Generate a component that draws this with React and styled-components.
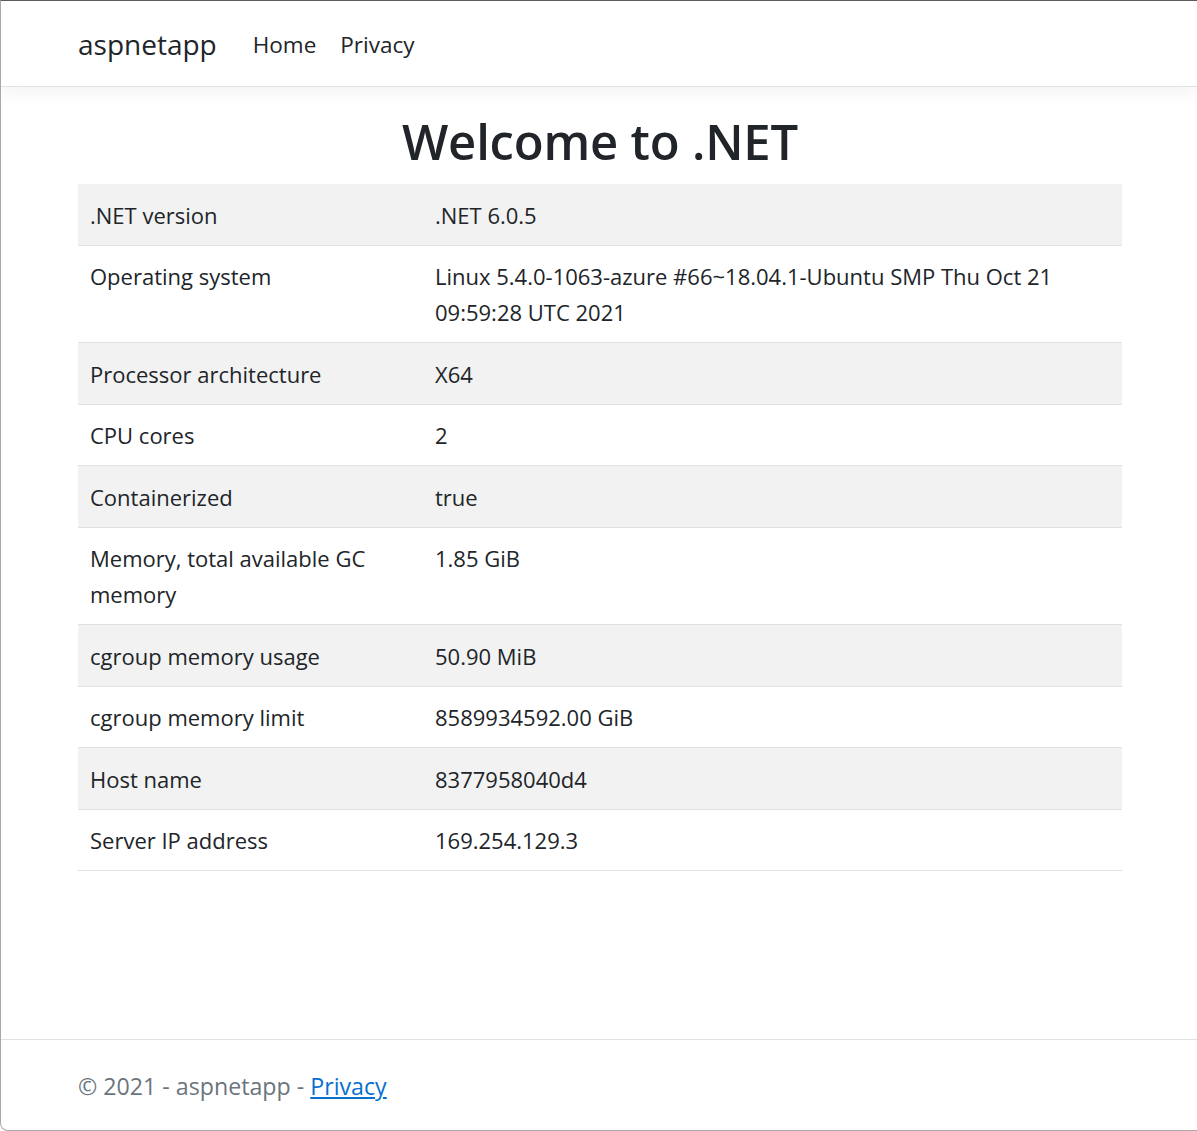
import styled, { createGlobalStyle } from "styled-components"

const GlobalStyle = createGlobalStyle`
  html, body {
    margin: 0;
    padding: 0;
  }
  body {
    font-family: "Open Sans", "Noto Sans", sans-serif;
    font-size: 22px;
    line-height: 36px;
    color: #212529;
    background: #ffffff;
  }
  * {
    box-sizing: border-box;
  }
`

const rows = [
  [".NET version", ".NET 6.0.5"],
  ["Operating system", "Linux 5.4.0-1063-azure #66~18.04.1-Ubuntu SMP Thu Oct 21 09:59:28 UTC 2021"],
  ["Processor architecture", "X64"],
  ["CPU cores", "2"],
  ["Containerized", "true"],
  ["Memory, total available GC memory", "1.85 GiB"],
  ["cgroup memory usage", "50.90 MiB"],
  ["cgroup memory limit", "8589934592.00 GiB"],
  ["Host name", "8377958040d4"],
  ["Server IP address", "169.254.129.3"],
]

export default function App() {
  return (
    <>
      <GlobalStyle />
      <Frame>
        <NavBar>
          <Container>
            <Brand href="#">aspnetapp</Brand>
            <NavList>
              <NavItem href="#">Home</NavItem>
              <NavItem href="#">Privacy</NavItem>
            </NavList>
          </Container>
        </NavBar>
        <Main>
          <Container>
            <Title>Welcome to .NET</Title>
            <InfoTable>
              <colgroup>
                <LabelCol />
                <col />
              </colgroup>
              <tbody>
                {rows.map(([label, value], i) => (
                  <Row key={label} $striped={i % 2 === 0}>
                    <Cell>{label}</Cell>
                    <Cell>{value}</Cell>
                  </Row>
                ))}
              </tbody>
            </InfoTable>
          </Container>
        </Main>
        <Footer>
          <Container>
            © 2021 - aspnetapp - <FooterLink href="#">Privacy</FooterLink>
          </Container>
        </Footer>
      </Frame>
    </>
  )
}

const Frame = styled.div`
  display: flex;
  flex-direction: column;
  min-height: 100vh;
  border-top: 1px solid #5c5c5c;
  border-left: 1px solid #a9a9a9;
  border-bottom: 1px solid #a9a9a9;
  border-bottom-left-radius: 8px;
  overflow: hidden;
`

const Container = styled.div`
  width: 100%;
  padding: 0 75px 0 77px;
`

const NavBar = styled.nav`
  position: relative;
  z-index: 1;
  background: #ffffff;
  border-bottom: 1.5px solid #dee2e6;
  box-shadow: 0 6px 18px rgba(0, 0, 0, 0.05);
  padding: 14px 0 11px;
  ${Container} {
    display: flex;
    align-items: center;
  }
`

const Brand = styled.a`
  font-size: 28px;
  line-height: 45px;
  padding: 7px 0 8px;
  margin-right: 24px;
  color: #212529;
  text-decoration: none;
`

const NavList = styled.div`
  display: flex;
`

const NavItem = styled.a`
  padding: 12px;
  font-size: 22.5px;
  color: #212529;
  text-decoration: none;
`

const Main = styled.main`
  flex: 1;
  padding-top: 24px;
  padding-bottom: 24px;
`

const Title = styled.h1`
  margin: 0 0 12px;
  text-align: center;
  font-size: 49px;
  line-height: 61px;
  font-weight: 600;
  letter-spacing: -0.2px;
`

const InfoTable = styled.table`
  width: 100%;
  border-collapse: collapse;
  table-layout: fixed;
`

const LabelCol = styled.col`
  width: 345px;
`

const Row = styled.tr`
  background: ${(p) => (p.$striped ? "#f2f2f2" : "#ffffff")};
  border-bottom: 1.5px solid #dee2e6;
`

const Cell = styled.td`
  padding: 12.5px 12px 12px;
  vertical-align: top;
  text-align: left;
`

const Footer = styled.footer`
  border-top: 1.5px solid #dee2e6;
  padding-top: 3px;
  line-height: 87px;
  font-size: 23.2px;
  white-space: nowrap;
  color: #6c757d;
`

const FooterLink = styled.a`
  color: #0a6fd1;
  text-decoration: underline;
`
